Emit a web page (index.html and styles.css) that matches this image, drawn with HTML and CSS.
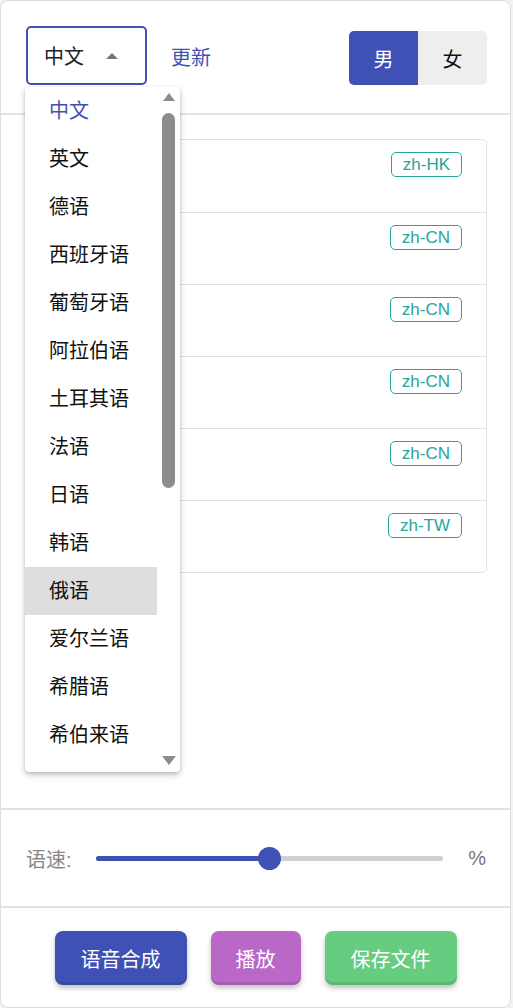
FILE: index.html
```html
<!DOCTYPE html>
<html lang="zh">
<head>
<meta charset="utf-8">
<title>语音合成</title>
<link rel="stylesheet" href="styles.css">
</head>
<body>
<div class="card">
  <div class="header">
    <div class="select">
      <span class="select-value">中文</span>
      <span class="caret"></span>
      <div class="menu">
        <ul class="menu-list">
          <li class="menu-item selected">中文</li>
          <li class="menu-item">英文</li>
          <li class="menu-item">德语</li>
          <li class="menu-item">西班牙语</li>
          <li class="menu-item">葡萄牙语</li>
          <li class="menu-item">阿拉伯语</li>
          <li class="menu-item">土耳其语</li>
          <li class="menu-item">法语</li>
          <li class="menu-item">日语</li>
          <li class="menu-item">韩语</li>
          <li class="menu-item hover">俄语</li>
          <li class="menu-item">爱尔兰语</li>
          <li class="menu-item">希腊语</li>
          <li class="menu-item">希伯来语</li>
          <li class="menu-item">意大利语</li>
        </ul>
        <div class="scrollbar">
          <span class="arrow-up"></span>
          <span class="thumb"></span>
          <span class="arrow-down"></span>
        </div>
      </div>
    </div>
    <a class="refresh">更新</a>
    <div class="toggle">
      <span class="toggle-btn active">男</span>
      <span class="toggle-btn">女</span>
    </div>
  </div>

  <div class="main">
    <div class="voice-list">
      <div class="voice-row"><span class="tag">zh-HK</span></div>
      <div class="voice-row"><span class="tag">zh-CN</span></div>
      <div class="voice-row"><span class="tag">zh-CN</span></div>
      <div class="voice-row"><span class="tag">zh-CN</span></div>
      <div class="voice-row"><span class="tag">zh-CN</span></div>
      <div class="voice-row"><span class="tag">zh-TW</span></div>
    </div>
  </div>

  <div class="speed">
    <span class="speed-label">语速:</span>
    <div class="slider">
      <div class="slider-fill"></div>
      <div class="slider-thumb"></div>
    </div>
    <span class="speed-unit">%</span>
  </div>

  <div class="actions">
    <button class="btn btn-wide btn-blue">语音合成</button>
    <button class="btn btn-purple">播放</button>
    <button class="btn btn-wide btn-green">保存文件</button>
  </div>
</div>
</body>
</html>
```
FILE: styles.css
```css
* { box-sizing: border-box; }
html, body { margin: 0; padding: 0; }
body {
  background: #f3f3f3;
  font-family: "Liberation Sans", "Noto Sans CJK SC", sans-serif;
  color: #222;
}
.card {
  width: 511px;
  height: 1008px;
  background: #fff;
  border: 1px solid #dedede;
  border-radius: 8px;
  display: flex;
  flex-direction: column;
}
.header {
  display: flex;
  align-items: flex-end;
  padding: 25px 23px 28px 25px;
  border-bottom: 2px solid #e2e2e2;
}
.select {
  position: relative;
  width: 121px;
  height: 59px;
  border: 2px solid #3f51b5;
  border-radius: 5px;
  display: flex;
  align-items: center;
  padding-left: 16px;
  font-size: 20px;
  color: #222;
}
.caret {
  margin-left: auto;
  margin-right: 27px;
  width: 0;
  height: 0;
  border-left: 6.5px solid transparent;
  border-right: 6.5px solid transparent;
  border-bottom: 6px solid #777;
}
.menu {
  position: absolute;
  left: -3px;
  top: 59px;
  width: 155px;
  height: 685px;
  background: #fff;
  border-radius: 4px;
  box-shadow: 0 3px 6px rgba(0,0,0,0.22), 0 1px 3px rgba(0,0,0,0.12);
  display: flex;
  overflow: hidden;
  z-index: 10;
}
.menu-list {
  list-style: none;
  margin: 0;
  padding: 0;
  width: 132px;
  overflow: hidden;
}
.menu-item {
  height: 48px;
  line-height: 48px;
  padding-left: 24px;
  font-size: 20px;
  color: #111;
  white-space: nowrap;
}
.menu-item.selected { color: #3f51b5; }
.menu-item.hover { background: #dedede; }
.scrollbar {
  width: 23px;
  display: flex;
  flex-direction: column;
  align-items: center;
  padding: 6px 0 7px;
}
.arrow-up {
  width: 0; height: 0;
  border-left: 6.5px solid transparent;
  border-right: 6.5px solid transparent;
  border-bottom: 8px solid #8c8c8c;
}
.thumb {
  margin-top: 12px;
  width: 13px;
  height: 375px;
  border-radius: 7px;
  background: #8c8c8c;
}
.arrow-down {
  margin-top: auto;
  width: 0; height: 0;
  border-left: 7px solid transparent;
  border-right: 7px solid transparent;
  border-top: 9px solid #8c8c8c;
}
.refresh {
  align-self: center;
  margin-left: 24px;
  margin-top: 2px;
  font-size: 20px;
  color: #3f51b5;
  cursor: pointer;
}
.toggle {
  margin-left: auto;
  display: flex;
  height: 54px;
  border-radius: 5px;
  overflow: hidden;
}
.toggle-btn {
  width: 69px;
  display: flex;
  align-items: center;
  justify-content: center;
  font-size: 20px;
  background: #eeeeee;
  color: #111;
}
.toggle-btn.active { background: #3f51b5; color: #fff; }
.main {
  flex: 0 0 693px;
  padding: 24px 23px 0 25px;
}
.voice-list {
  border: 1px solid #e2e2e2;
  border-radius: 5px;
}
.voice-row {
  height: 72px;
  display: flex;
  justify-content: flex-end;
  align-items: flex-start;
  padding: 12px 24px 0 0;
  border-top: 1px solid #e2e2e2;
}
.voice-row:first-child { border-top: none; }
.tag {
  height: 25px;
  line-height: 23px;
  padding: 0 11px;
  border: 1px solid #26a69a;
  border-radius: 5px;
  color: #26a69a;
  font-size: 17px;
}
.speed {
  flex: 0 0 98px;
  display: flex;
  align-items: center;
  padding: 0 24px 0 25px;
  border-top: 2px solid #e2e2e2;
}
.speed-label {
  font-size: 20px;
  color: #888;
}
.slider {
  position: relative;
  flex: 1;
  height: 5px;
  margin: 0 25px 0 24px;
  border-radius: 3px;
  background: #cfcfcf;
}
.slider-fill {
  width: 50%;
  height: 100%;
  border-radius: 3px;
  background: #3f51b5;
}
.slider-thumb {
  position: absolute;
  left: 50%;
  top: 50%;
  width: 23px;
  height: 23px;
  margin: -11.5px 0 0 -11.5px;
  border-radius: 50%;
  background: #3f51b5;
}
.speed-unit {
  font-size: 20px;
  color: #777;
}
.actions {
  flex: 1;
  display: flex;
  justify-content: center;
  align-items: flex-start;
  gap: 24px;
  padding-top: 23px;
  border-top: 2px solid #e2e2e2;
}
.btn {
  height: 54px;
  padding: 0 25px;
  border: none;
  border-radius: 8px;
  font-family: "Liberation Sans", "Noto Sans CJK SC", sans-serif;
  font-size: 20px;
  color: #fff;
  box-shadow: inset 0 -3px 0 rgba(0,0,0,0.1), 0 3px 5px rgba(0,0,0,0.25);
}
.btn-wide { min-width: 132px; }
.btn-blue { background: #3f51b5; }
.btn-purple { background: #ba68c8; }
.btn-green { background: #66cc7f; }
```
